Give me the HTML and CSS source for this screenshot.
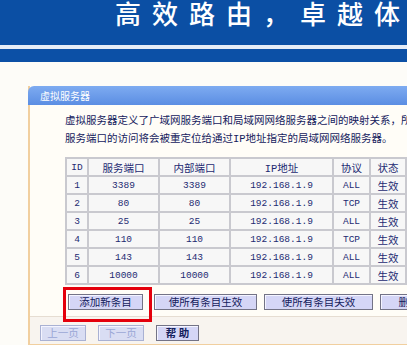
FILE: index.html
```html
<!DOCTYPE html>
<html lang="zh-CN">
<head>
    <meta charset="UTF-8">
    <meta name="viewport" content="width=device-width, initial-scale=1.0">
    <title>虚拟服务器</title>
    <link rel="stylesheet" href="styles.css">
</head>
<body>
    <div class="banner">
        <div class="slogan">高效路由，卓越体验</div>
    </div>
    <div class="banner-band"></div>

    <div class="panel">
        <div class="panel-title">虚拟服务器</div>

        <div class="panel-body">
            <p class="intro">
                虚拟服务器定义了广域网服务端口和局域网网络服务器之间的映射关系，所有对该广域网<br>
                服务端口的访问将会被重定位给通过IP地址指定的局域网网络服务器。
            </p>

            <table class="rules">
                <colgroup>
                    <col style="width: 22px">
                    <col style="width: 71px">
                    <col style="width: 71px">
                    <col style="width: 103px">
                    <col style="width: 37px">
                    <col style="width: 36px">
                    <col style="width: 90px">
                </colgroup>
                <tr>
                    <th class="num">ID</th>
                    <th>服务端口</th>
                    <th>内部端口</th>
                    <th>IP地址</th>
                    <th>协议</th>
                    <th>状态</th>
                    <th>配置</th>
                </tr>
                <tr>
                    <td class="num">1</td><td class="num">3389</td><td class="num">3389</td>
                    <td class="num">192.168.1.9</td><td class="num">ALL</td><td>生效</td><td>编辑 删除</td>
                </tr>
                <tr>
                    <td class="num">2</td><td class="num">80</td><td class="num">80</td>
                    <td class="num">192.168.1.9</td><td class="num">TCP</td><td>生效</td><td>编辑 删除</td>
                </tr>
                <tr>
                    <td class="num">3</td><td class="num">25</td><td class="num">25</td>
                    <td class="num">192.168.1.9</td><td class="num">ALL</td><td>生效</td><td>编辑 删除</td>
                </tr>
                <tr>
                    <td class="num">4</td><td class="num">110</td><td class="num">110</td>
                    <td class="num">192.168.1.9</td><td class="num">TCP</td><td>生效</td><td>编辑 删除</td>
                </tr>
                <tr>
                    <td class="num">5</td><td class="num">143</td><td class="num">143</td>
                    <td class="num">192.168.1.9</td><td class="num">ALL</td><td>生效</td><td>编辑 删除</td>
                </tr>
                <tr>
                    <td class="num">6</td><td class="num">10000</td><td class="num">10000</td>
                    <td class="num">192.168.1.9</td><td class="num">ALL</td><td>生效</td><td>编辑 删除</td>
                </tr>
            </table>

            <div class="actions">
                <button class="btn btn-add">添加新条目</button>
                <button class="btn btn-on">使所有条目生效</button>
                <button class="btn btn-off">使所有条目失效</button>
                <button class="btn btn-del">删除所有条目</button>
            </div>
        </div>

        <div class="panel-foot">
            <button class="btn btn-page" disabled>上一页</button>
            <button class="btn btn-page" disabled>下一页</button>
            <button class="btn btn-help">帮 助</button>
        </div>

        <!-- red annotation box around the add button -->
        <div class="highlight"></div>
    </div>
</body>
</html>
```

FILE: styles.css
```css
body {
    margin: 0;
    width: 407px;
    height: 345px;
    overflow: hidden;
    background: #fdfcf8;
    font-family: "Liberation Mono", "Noto Sans CJK SC", monospace;
    color: #14205c;
}

.banner {
    height: 45px;
    background: #0b4fa4;
    border-bottom: 4px solid #e6edf7;
    overflow: hidden;
}

.slogan {
    padding-left: 115px;
    font-family: "Noto Sans CJK SC", sans-serif;
    font-size: 26px;
    font-weight: 500;
    line-height: 26px;
    letter-spacing: 11px;
    color: #ffffff;
    white-space: nowrap;
}

.banner-band {
    height: 13px;
    background: #0c50a6;
}

.panel {
    position: relative;
    width: 600px;
    margin: 24px 0 0 28px;
    border-left: 2px solid #f1cf9f;
    border-bottom: 2px solid #f1cf9f;
    background: #fffdf7;
}

.panel-title {
    height: 19px;
    margin-left: -2px;
    padding-left: 12px;
    border-radius: 6px 0 0 0;
    background: linear-gradient(#7eabf1, #5b8ee3);
    font-family: "Noto Sans CJK SC", sans-serif;
    font-size: 10px;
    line-height: 19px;
    color: #ffffff;
}

.panel-body {
    padding: 7px 0 6px 35px;
    border-bottom: 1px solid #e6ddd2;
}

.intro {
    margin: 0;
    font-size: 10.5px;
    line-height: 18px;
    white-space: nowrap;
}

.rules {
    margin-top: 9px;
    border-collapse: collapse;
    table-layout: fixed;
    font-size: 10.5px;
    color: #1d2a72;
}

.rules th,
.rules td {
    height: 16px;
    padding: 0;
    border: 2px solid #c9c9cf;
    background: #f7f7f7;
    text-align: center;
    font-weight: normal;
    white-space: nowrap;
    overflow: hidden;
}

.rules .num {
    font-size: 9.5px;
}

.actions {
    display: flex;
    gap: 7px;
    margin-top: 9px;
}

.btn {
    height: 16px;
    padding: 0;
    border: 1px solid #737386;
    background: #d5d6f6;
    box-shadow: inset 1px 1px #f4f4ff;
    font-family: "Noto Sans CJK SC", sans-serif;
    font-size: 10.5px;
    line-height: 14px;
    color: #14205c;
}

.btn-add {
    width: 75px;
    margin-left: 3px;
    margin-right: 4px;
}

.btn-on {
    width: 103px;
}

.btn-off {
    width: 109px;
}

.btn-del {
    width: 100px;
}

.panel-foot {
    display: flex;
    gap: 12px;
    padding: 8px 0 3px 10px;
    background: #f8f4ef;
}

.btn-page {
    width: 46px;
    border-color: #a9b1d3;
    background: #d9ddf3;
    color: #9aa6d6;
}

.btn-help {
    width: 43px;
    font-weight: bold;
}

.highlight {
    position: absolute;
    left: 33px;
    top: 201px;
    width: 83px;
    height: 29px;
    border: 3px solid #e4000c;
}
```
